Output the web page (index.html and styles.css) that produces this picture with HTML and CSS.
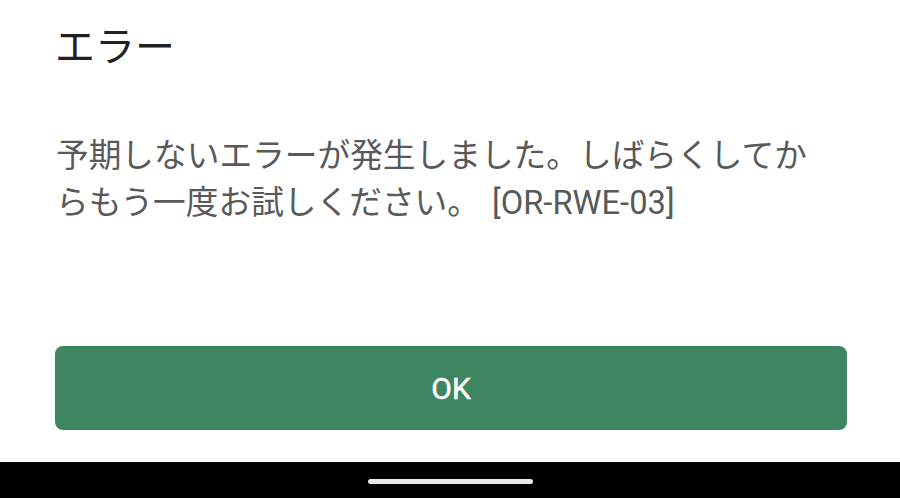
FILE: index.html
```html
<!DOCTYPE html>
<html lang="ja">
<head>
<meta charset="utf-8">
<link rel="stylesheet" href="styles.css">
</head>
<body>
<div class="screen">
  <div class="dialog">
    <h1 class="title">エラー</h1>
    <p class="message">予期しないエラーが発生しました。しばらくしてからもう一度お試しください。 [OR-RWE-03]</p>
    <button class="ok">OK</button>
  </div>
  <div class="navbar"><div class="handle"></div></div>
</div>
</body>
</html>
```
FILE: styles.css
```css
html, body {
  margin: 0;
  padding: 0;
  background: #ffffff;
}
.screen {
  width: 900px;
  height: 498px;
  display: flex;
  flex-direction: column;
  overflow: hidden;
}
.dialog {
  height: 462px;
  padding: 0 53px 0 55px;
  box-sizing: border-box;
  display: flex;
  flex-direction: column;
}
.title {
  margin: 20px 0 0 0;
  font-family: "Noto Sans CJK JP", "Noto Sans", sans-serif;
  font-weight: 400;
  font-size: 40px;
  line-height: 48px;
  color: #212121;
}
.message {
  margin: 65px 0 0 0;
  max-width: 770px;
  font-family: Roboto, "Noto Sans CJK JP", sans-serif;
  font-size: 32.7px;
  line-height: 47px;
  color: #595959;
  padding-left: 1px;
  word-spacing: 4px;
}
.ok {
  margin-top: auto;
  margin-bottom: 32px;
  height: 84px;
  width: 100%;
  border: none;
  border-radius: 8px;
  background: #3e8662;
  color: #ffffff;
  font-family: Roboto, sans-serif;
  font-weight: 400;
  font-size: 30px;
  -webkit-text-stroke: 0.5px #ffffff;
}
.navbar {
  height: 36px;
  background: #000000;
  display: flex;
  justify-content: center;
  align-items: center;
}
.handle {
  width: 165px;
  height: 5px;
  border-radius: 3px;
  background: #e8e8e8;
  margin-top: 2px;
}
```
